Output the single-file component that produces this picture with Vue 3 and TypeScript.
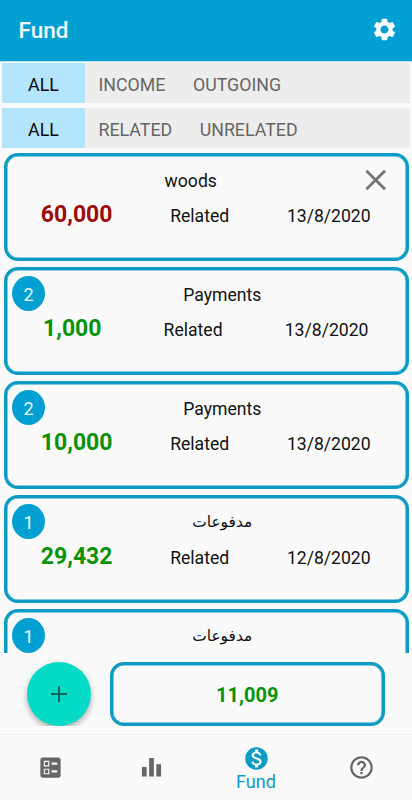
<script setup lang="ts">
interface Entry {
  title: string
  amount: string
  relation: string
  date: string
  outgoing?: boolean
  arabic?: boolean
  count?: number
}

const typeFilters: string[] = ['ALL', 'INCOME', 'OUTGOING']
const relationFilters: string[] = ['ALL', 'RELATED', 'UNRELATED']

const entries: Entry[] = [
  { title: 'woods', amount: '60,000', relation: 'Related', date: '13/8/2020', outgoing: true },
  { title: 'Payments', amount: '1,000', relation: 'Related', date: '13/8/2020', count: 2 },
  { title: 'Payments', amount: '10,000', relation: 'Related', date: '13/8/2020', count: 2 },
  { title: 'مدفوعات', amount: '29,432', relation: 'Related', date: '12/8/2020', count: 1, arabic: true },
  { title: 'مدفوعات', amount: '', relation: '', date: '', count: 1, arabic: true },
]
</script>

<template>
  <div class="screen">
    <header class="bar">
      <h1>Fund</h1>
      <svg class="gear" viewBox="0 0 24 24"><path d="M19.14 12.94c.04-.3.06-.61.06-.94 0-.32-.02-.64-.07-.94l2.03-1.58c.18-.14.23-.41.12-.61l-1.92-3.32c-.12-.22-.37-.29-.59-.22l-2.39.96c-.5-.38-1.03-.7-1.62-.94l-.36-2.54c-.04-.24-.24-.41-.48-.41h-3.84c-.24 0-.43.17-.47.41l-.36 2.54c-.59.24-1.13.57-1.62.94l-2.39-.96c-.22-.08-.47 0-.59.22L2.74 8.87c-.12.21-.08.47.12.61l2.03 1.58c-.05.3-.09.63-.09.94s.02.64.07.94l-2.03 1.58c-.18.14-.23.41-.12.61l1.92 3.32c.12.22.37.29.59.22l2.39-.96c.5.38 1.03.7 1.62.94l.36 2.54c.05.24.24.41.48.41h3.84c.24 0 .44-.17.47-.41l.36-2.54c.59-.24 1.13-.56 1.62-.94l2.39.96c.22.08.47 0 .59-.22l1.92-3.32c.12-.22.07-.47-.12-.61l-2.01-1.58zM12 15.6c-1.98 0-3.6-1.62-3.6-3.6s1.62-3.6 3.6-3.6 3.6 1.62 3.6 3.6-1.62 3.6-3.6 3.6z" /></svg>
    </header>

    <div class="filters">
      <div class="tabs">
        <span v-for="(f, i) in typeFilters" :key="f" class="tab" :class="{ on: i === 0 }">{{ f }}</span>
      </div>
      <div class="tabs">
        <span v-for="(f, i) in relationFilters" :key="f" class="tab" :class="{ on: i === 0 }">{{ f }}</span>
      </div>
    </div>

    <main class="list">
      <article v-for="(e, i) in entries" :key="i" class="card">
        <div class="head">
          <span v-if="e.count" class="count">{{ e.count }}</span>
          <span class="title" :class="{ arabic: e.arabic }">{{ e.title }}</span>
          <svg v-if="!e.count" class="close" viewBox="0 0 30 28"><path d="M-3.600 4.700L15 23.300M15 4.700L-3.600 23.300" /></svg>
        </div>
        <div class="row">
          <strong :class="{ out: e.outgoing }">{{ e.amount }}</strong>
          <span>{{ e.relation }}</span>
          <span>{{ e.date }}</span>
        </div>
      </article>
    </main>

    <section class="summary">
      <button class="add" aria-label="Add">
        <svg viewBox="0 0 16 16"><path d="M8 0V16M0 8H16" /></svg>
      </button>
      <div class="total">11,009</div>
    </section>

    <nav class="nav">
      <div class="item">
        <svg viewBox="0 0 24 24"><path d="M13 9.500h5v-2h-5v2zm0 7h5v-2h-5v2zm6 4.500H5c-1.100 0-2-.9-2-2V5c0-1.100.9-2 2-2h14c1.100 0 2 .9 2 2v14c0 1.100-.9 2-2 2zM6 11h5V6H6v5zm1-4h3v3H7V7zM6 18h5v-5H6v5zm1-4h3v3H7v-3z" /><path d="M7.500 7.500h2v2h-2zM7.500 14.500h2v2h-2z" /></svg>
      </div>
      <div class="item">
        <svg viewBox="0 0 24 24"><path d="M3.500 11.500h4.200V20H3.500zM9.900 3.500h4.200V20H9.900zM16.300 9h4.200v11h-4.200z" /></svg>
      </div>
      <div class="item active">
        <svg viewBox="0 0 24 24"><path d="M12 2C6.480 2 2 6.480 2 12s4.480 10 10 10 10-4.480 10-10S17.520 2 12 2zm1.410 16.090V20h-2.670v-1.930c-1.710-.36-3.160-1.460-3.270-3.400h1.960c.1 1.050.82 1.870 2.650 1.870 1.960 0 2.400-.98 2.400-1.590 0-.83-.44-1.610-2.670-2.140-2.480-.6-4.180-1.620-4.180-3.670 0-1.720 1.390-2.840 3.110-3.210V4h2.670v1.950c1.860.45 2.790 1.860 2.850 3.390H14.300c-.05-1.110-.64-1.870-2.220-1.870-1.500 0-2.400.68-2.400 1.640 0 .84.65 1.390 2.670 1.910s4.180 1.390 4.180 3.910c-.01 1.830-1.380 2.830-3.120 3.160z" /></svg>
        <span>Fund</span>
      </div>
      <div class="item">
        <svg viewBox="0 0 24 24"><path d="M11 18h2v-2h-2v2zm1-16C6.480 2 2 6.480 2 12s4.480 10 10 10 10-4.480 10-10S17.520 2 12 2zm0 18c-4.410 0-8-3.590-8-8s3.590-8 8-8 8 3.590 8 8-3.590 8-8 8zm0-14c-2.210 0-4 1.790-4 4h2c0-1.100.9-2 2-2s2 .9 2 2c0 2-3 1.750-3 5h2c0-2.250 3-2.500 3-5 0-2.210-1.790-4-4-4z" /></svg>
      </div>
    </nav>
  </div>
</template>

<style>
body { background: #fafafa; }
</style>

<style scoped>
.screen {
  box-sizing: border-box;
  width: 412px;
  height: 800px;
  display: flex;
  flex-direction: column;
  overflow: hidden;
  background: #fafafa;
  color: #111;
  font-family: Roboto, "Noto Sans", "DejaVu Sans", sans-serif;
}
.bar {
  flex: none;
  height: 61px;
  box-sizing: border-box;
  padding: 0 14px 1px 18.500px;
  display: flex;
  align-items: center;
  justify-content: space-between;
  background: #02a0d2;
  color: #f2fdff;
  box-shadow: 0 1px 1px #bfe3ef;
}
h1 { margin: 0; font-size: 22.500px; line-height: 28px; font-weight: 500; }
.gear { width: 27px; height: 27px; fill: #fff; margin-top: -2px; }
.filters {
  flex: none;
  padding: 2px 2px 0;
  display: flex;
  flex-direction: column;
  gap: 5px;
}
.tabs { height: 40px; display: flex; background: #ededed; }
.tab {
  display: flex;
  align-items: center;
  box-sizing: border-box;
  padding: 2px 14px 0 13.500px;
  font-size: 17.800px;
  color: #666;
}
.tab.on { width: 83px; padding: 2px 0 0; justify-content: center; background: #b3e5fe; color: #0a0a0a; }
.list {
  flex: none;
  height: 505px;
  box-sizing: border-box;
  padding: 5px 3.500px 0;
  display: flex;
  flex-direction: column;
  gap: 6px;
  overflow: hidden;
}
.card {
  flex: none;
  box-sizing: border-box;
  height: 108px;
  border: 3px solid #0d9bc3;
  box-shadow: inset 0 0 0 0.500px #0d9bc3;
  border-radius: 14px;
  padding: 5.500px 6px 5px 5.500px;
}
.head { display: flex; height: 36px; align-items: center; }
.count {
  width: 33px;
  height: 35px;
  border-radius: 50%;
  background: #02a0d2;
  color: #e8faff;
  font-size: 18px;
  line-height: 37px;
  text-align: center;
}
.title { flex: 1; text-align: center; font-size: 17.600px; line-height: 24px; padding-top: 2px; }
.title.arabic { font-size: 15.400px; padding-top: 0; }
.close { width: 30px; height: 28px; overflow: visible; fill: none; stroke: #757575; stroke-width: 2.800; }
.row { display: flex; justify-content: space-around; align-items: center; height: 32px; font-size: 17.600px; }
.row span { padding-top: 5px; }
.row strong { font-size: 23px; font-weight: 700; color: #079207; padding-top: 1px; }
.row strong.out { color: #9a0c08; }
.summary {
  flex: none;
  height: 73px;
  box-sizing: border-box;
  padding: 9px 27.500px 0 27px;
  display: flex;
  gap: 19px;
  overflow: hidden;
}
.add {
  width: 64px;
  height: 64px;
  padding: 0;
  border: 0;
  border-radius: 50%;
  background: #04dbc6;
  box-shadow: 0 3px 6px rgba(0, 0, 0, 0.32);
  display: flex;
  align-items: center;
  justify-content: center;
}
.add svg { width: 16px; height: 16px; fill: none; stroke: #146459; stroke-width: 2; }
.total {
  flex: 1;
  box-sizing: border-box;
  height: 64px;
  border: 3px solid #0d9bc3;
  box-shadow: inset 0 0 0 0.500px #0d9bc3;
  border-radius: 14px;
  padding-top: 1px;
  display: flex;
  align-items: center;
  justify-content: center;
  font-size: 20px;
  font-weight: 700;
  color: #079207;
}
.nav {
  flex: none;
  margin-top: 8px;
  height: 66px;
  box-sizing: border-box;
  border-top: 1px solid #efefef;
  display: grid;
  grid-template-columns: 101px 100px 110px 101px;
}
.item { display: flex; flex-direction: column; align-items: center; justify-content: center; color: #666; }
.item svg { width: 27px; height: 27px; fill: currentColor; }
.item.active { color: #0d9bc6; padding-top: 2px; }
.item span { font-size: 18px; line-height: 20px; }
</style>
